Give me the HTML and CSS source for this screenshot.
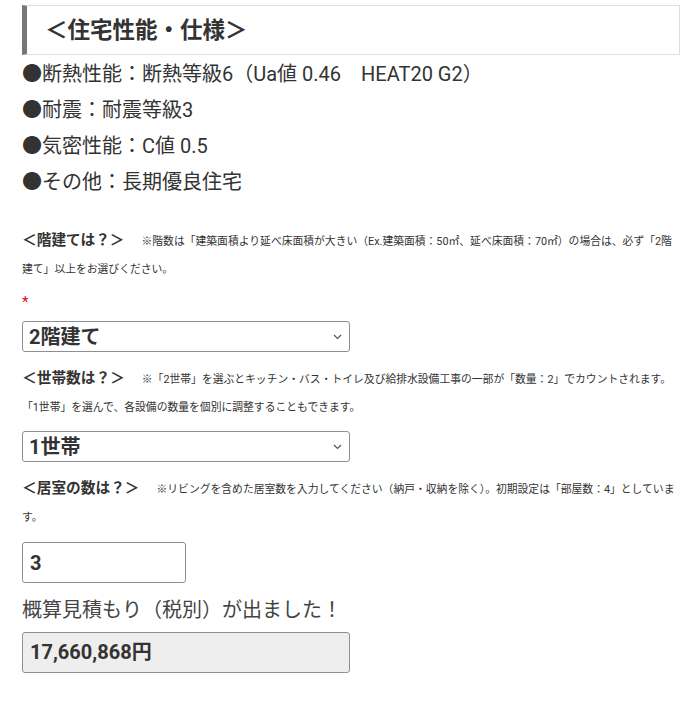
FILE: index.html
```html
<!DOCTYPE html>
<html lang="ja">
<head>
    <meta charset="UTF-8">
    <meta name="viewport" content="width=device-width, initial-scale=1.0">
    <title>概算見積もり</title>
    <link rel="stylesheet" href="styles.css">
</head>
<body>
    <div class="container">
        <h2 class="section-title">＜住宅性能・仕様＞</h2>
        <ul class="spec-list">
            <li>●断熱性能：断熱等級6（Ua値 0.46　HEAT20 G2）</li>
            <li>●耐震：耐震等級3</li>
            <li>●気密性能：C値 0.5</li>
            <li>●その他：長期優良住宅</li>
        </ul>

        <div class="field field-first">
            <p class="field-label"><strong>＜階建ては？＞</strong><span class="note">※階数は「建築面積より延べ床面積が大きい（Ex.建築面積：50㎡、延べ床面積：70㎡）の場合は、必ず「2階建て」以上をお選びください。</span></p>
            <div class="required">*</div>
            <div class="select-wrap">
                <select id="floors" class="select-box">
                    <option>1階建て</option>
                    <option selected>2階建て</option>
                    <option>3階建て</option>
                </select>
                <svg class="chevron" width="9" height="6" viewBox="0 0 9 6"><path d="M1 1 L4.5 4.5 L8 1" fill="none" stroke="#555" stroke-width="1.2"/></svg>
            </div>
        </div>

        <div class="field">
            <p class="field-label"><strong>＜世帯数は？＞</strong><span class="note">※「2世帯」を選ぶとキッチン・バス・トイレ及び給排水設備工事の一部が「数量：2」でカウントされます。「1世帯」を選んで、各設備の数量を個別に調整することもできます。</span></p>
            <div class="select-wrap">
                <select id="households" class="select-box">
                    <option selected>1世帯</option>
                    <option>2世帯</option>
                </select>
                <svg class="chevron" width="9" height="6" viewBox="0 0 9 6"><path d="M1 1 L4.5 4.5 L8 1" fill="none" stroke="#555" stroke-width="1.2"/></svg>
            </div>
        </div>

        <div class="field">
            <p class="field-label"><strong>＜居室の数は？＞</strong><span class="note">※リビングを含めた居室数を入力してください（納戸・収納を除く）。初期設定は「部屋数：4」としています。</span></p>
            <input type="text" id="rooms" class="number-input" value="3">
        </div>

        <p class="result-title">概算見積もり（税別）が出ました！</p>
        <div class="result-box">17,660,868円</div>
    </div>
</body>
</html>
```

FILE: styles.css
```css
body {
    font-family: Roboto, 'Noto Sans CJK JP', sans-serif;
    margin: 0;
    padding: 0;
    background-color: #fff;
    color: #333;
}

.container {
    padding: 5px 13px 30px 22px;
}

.section-title {
    margin: 0;
    padding: 10px 18px 9px;
    font-size: 22.5px;
    line-height: 29px;
    font-weight: bold;
    color: #333;
    border: 1px solid #ddd;
    border-left: 5px solid #777;
}

.spec-list {
    list-style: none;
    margin: 1px 0 0;
    padding: 0;
    font-size: 20px;
    line-height: 36px;
}

.field {
    margin-top: 13px;
}

.field-first {
    margin-top: 27px;
}

.field-label {
    margin: 0;
    font-size: 14.7px;
    line-height: 27px;
}

.field-label strong {
    margin-right: 17px;
}

.note {
    font-size: 10.8px;
}

.required {
    color: #e00;
    font-size: 15px;
    line-height: 27px;
    margin-top: 6px;
}

.select-wrap {
    position: relative;
    width: 328px;
    margin-top: 5px;
}

.field + .field .select-wrap {
    margin-top: 10px;
}

.select-box {
    display: block;
    width: 328px;
    height: 31px;
    padding: 0 6px;
    font-family: inherit;
    font-size: 20px;
    font-weight: bold;
    color: #333;
    background-color: #fff;
    border: 1px solid #8c8f94;
    border-radius: 3px;
    appearance: none;
    -webkit-appearance: none;
}

.chevron {
    position: absolute;
    right: 8px;
    top: 13px;
    pointer-events: none;
}

.number-input {
    display: block;
    box-sizing: border-box;
    width: 164px;
    height: 41px;
    margin-top: 11px;
    padding: 0 7px;
    font-family: inherit;
    font-size: 20px;
    font-weight: bold;
    color: #333;
    border: 1px solid #8c8f94;
    border-radius: 3px;
    outline: none;
}

.result-title {
    margin: 12px 0 0;
    font-size: 20px;
    line-height: 30px;
    color: #444;
}

.result-box {
    box-sizing: border-box;
    width: 328px;
    height: 41px;
    margin-top: 7px;
    padding: 0 7px;
    font-size: 20px;
    font-weight: bold;
    line-height: 39px;
    color: #333;
    background-color: #eee;
    border: 1px solid #8c8f94;
    border-radius: 3px;
}
```
